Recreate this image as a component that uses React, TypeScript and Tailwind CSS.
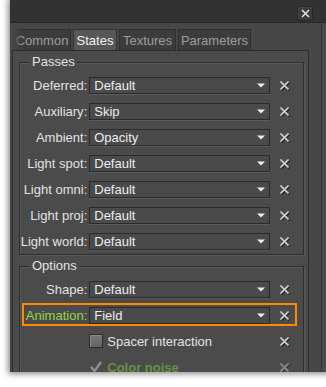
import React from "react";

const XIcon = () => (
  <svg width="12" height="12" viewBox="0 0 12 12">
    <path d="M2.6 2.6 L10.4 10.4 M10.4 2.6 L2.6 10.4" stroke="#202020" strokeWidth="1.8" />
    <path d="M1.6 1.6 L9.4 9.4 M9.4 1.6 L1.6 9.4" stroke="#b8b8b8" strokeWidth="2" />
    <path d="M1.6 1.6 L9.4 9.4 M9.4 1.6 L1.6 9.4" stroke="#ececec" strokeWidth="1" strokeDasharray="1 1" />
  </svg>
);

const Arrow = () => (
  <svg width="8" height="5" viewBox="0 0 8 5">
    <path d="M0 0.5 L8 0.5 L4 4.5 Z" fill="#f0f0f0" />
  </svg>
);

function Row({
  label,
  value,
  green,
  highlight,
}: {
  label: string;
  value: string;
  green?: boolean;
  highlight?: boolean;
}) {
  return (
    <div className="relative flex items-center h-[18px]">
      <div
        className={
          green
            ? "w-[68px] text-right text-[#8fd84a] leading-[15px]"
            : "w-[68px] text-right text-[#e2e2e2] leading-[15px]"
        }
      >
        {label}:
      </div>
      <div className="ml-[2px] w-[183px] h-[17px] border border-[#2a2a2a] bg-[#4a4a4a] shadow-[0_1px_0_#5c5c5c] flex items-center pl-[4px] pr-[4px]">
        <span className="flex-1 text-[#ececec] leading-[15px]">{value}</span>
        <Arrow />
      </div>
      <div className="w-[29px] flex justify-center pt-[1px]">
        <XIcon />
      </div>
      {highlight && (
        <div className="absolute left-[2px] top-[-3px] w-[275px] h-[23px] border-2 border-[#ff8a00]" />
      )}
    </div>
  );
}

function Group({ title, children }: { title: string; children: React.ReactNode }) {
  return (
    <div className="relative border border-[#2e2e2e] shadow-[inset_1px_1px_0_#585858,1px_1px_0_#585858] pr-[4px]">
      <div className="absolute left-[10px] top-[-9px] px-[2px] bg-[#4b4b4b] text-[#e2e2e2] leading-[15px]">
        {title}
      </div>
      {children}
    </div>
  );
}

export default function App() {
  const tabs = [
    { name: "Common", w: "w-[58px]", sel: false },
    { name: "States", w: "w-[44px]", sel: true },
    { name: "Textures", w: "w-[57px]", sel: false },
    { name: "Parameters", w: "w-[73px]", sel: false },
  ];
  return (
    <div
      className="w-[326px] h-[387px] bg-white overflow-hidden pl-[10px] text-[13px]"
      style={{ fontFamily: '"Liberation Sans", Arial, sans-serif' }}
    >
      <div className="w-[320px] h-[372px] flex flex-col bg-[#474747] shadow-[0_0_6px_2px_rgba(0,0,0,0.45)] overflow-hidden">
        {/* title bar */}
        <div className="h-[23px] bg-[#323232] border-b border-[#262626] flex items-start justify-end pr-[17px] pt-[6px] shrink-0">
          <div className="w-[16px] h-[15px] rounded-[2px] bg-[#3b3b3b] border border-[#272727] shadow-[inset_1px_1px_0_#454545] flex items-center justify-center">
            <svg width="9" height="9" viewBox="0 0 9 9">
              <path d="M1 1 L8 8 M8 1 L1 8" stroke="#e4e4e4" strokeWidth="1.5" />
            </svg>
          </div>
        </div>
        {/* body */}
        <div className="flex-1 flex min-h-0">
          <div className="w-[312px] border-r border-[#333333] flex flex-col pl-[2px] pt-[6px] min-h-0">
            {/* tabs */}
            <div className="relative flex gap-[2px] pl-[1px] h-[21px] shrink-0">
              {tabs.map((t) => (
                <div
                  key={t.name}
                  className={
                    t.sel
                      ? `${t.w} h-[21px] bg-[#575757] border border-b-0 border-[#333333] text-[#f2f2f2] flex items-center justify-center leading-[15px]`
                      : `${t.w} h-[21px] bg-[#3c3c3c] border border-b-0 border-[#2e2e2e] text-[#9c9c9c] flex items-center justify-center leading-[15px]`
                  }
                >
                  {t.name}
                </div>
              ))}
              <div className="absolute left-0 top-0 w-[12px] h-[21px] bg-gradient-to-r from-[#474747] to-transparent" />
            </div>
            {/* panel */}
            <div className="w-[297px] flex-1 min-h-0 border border-b-0 border-[#2c2c2c] bg-[#4b4b4b] pl-[6px] pr-[4px] pt-[11px] flex flex-col gap-[11px] overflow-hidden">
              <Group title="Passes">
                <div className="flex flex-col gap-[8px] pt-[13px] pb-[4px]">
                  <Row label="Deferred" value="Default" />
                  <Row label="Auxiliary" value="Skip" />
                  <Row label="Ambient" value="Opacity" />
                  <Row label="Light spot" value="Default" />
                  <Row label="Light omni" value="Default" />
                  <Row label="Light proj" value="Default" />
                  <Row label="Light world" value="Default" />
                </div>
              </Group>
              <Group title="Options">
                <div className="flex flex-col gap-[8px] pt-[13px] pb-[10px]">
                  <Row label="Shape" value="Default" />
                  <Row label="Animation" value="Field" green highlight />
                  <div className="flex items-center h-[18px]">
                    <div className="w-[70px]" />
                    <div className="w-[183px] flex items-center">
                      <div className="w-[14px] h-[14px] border border-[#2c2c2c] bg-gradient-to-b from-[#7a7a7a] to-[#636363] shadow-[inset_1px_1px_0_#8a8a8a]" />
                      <span className="ml-[4px] text-[#e2e2e2] leading-[15px]">Spacer interaction</span>
                    </div>
                    <div className="w-[29px] flex justify-center pt-[1px]">
                      <XIcon />
                    </div>
                  </div>
                  <div className="flex items-center h-[18px] opacity-50">
                    <div className="w-[70px]" />
                    <div className="w-[183px] flex items-center">
                      <div className="w-[14px] h-[14px] flex items-center justify-center">
                        <svg width="14" height="14" viewBox="0 0 14 14">
                          <path d="M2 7 L5.5 11 L12 2" stroke="#d0d0d0" strokeWidth="2.4" fill="none" />
                        </svg>
                      </div>
                      <span className="ml-[4px] text-[#7ed63a] font-bold leading-[15px]">Color noise</span>
                    </div>
                    <div className="w-[29px] flex justify-center pt-[1px]">
                      <XIcon />
                    </div>
                  </div>
                </div>
              </Group>
            </div>
          </div>
          <div className="flex-1 bg-[#4a4a4a]" />
        </div>
      </div>
    </div>
  );
}
